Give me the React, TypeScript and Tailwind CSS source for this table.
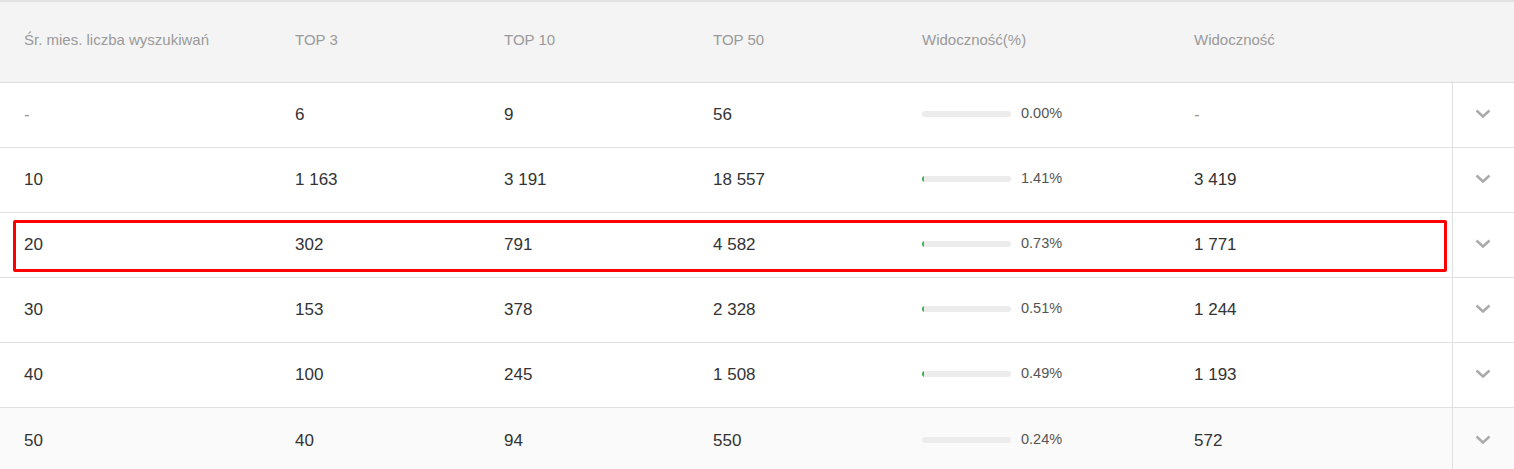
import React from "react";

const rows = [
  { a: "-", b: "6", c: "9", d: "56", p: "0.00%", g: 0, v: "-", dim: true },
  { a: "10", b: "1 163", c: "3 191", d: "18 557", p: "1.41%", g: 2, v: "3 419" },
  { a: "20", b: "302", c: "791", d: "4 582", p: "0.73%", g: 2, v: "1 771", hl: true },
  { a: "30", b: "153", c: "378", d: "2 328", p: "0.51%", g: 2, v: "1 244" },
  { a: "40", b: "100", c: "245", d: "1 508", p: "0.49%", g: 2, v: "1 193" },
  { a: "50", b: "40", c: "94", d: "550", p: "0.24%", g: 0, v: "572", last: true },
];

const cols = "grid grid-cols-[271px_209px_209px_209px_272px_282px_62px]";

function Chevron() {
  return (
    <svg width="16" height="10" viewBox="0 0 16 10" fill="none">
      <path d="M1.5 1.5 L8 7.5 L14.5 1.5" stroke="#aaaaaa" strokeWidth="2.4" />
    </svg>
  );
}

export default function App() {
  return (
    <div className="w-[1514px] h-[469px] overflow-hidden bg-white font-['Liberation_Sans',Arial,sans-serif] border-t-2 border-[#e2e2e2]">
      <div className={`${cols} h-[81px] bg-[#f4f4f4] border-b border-[#dcdcdc] text-[15px] text-[#9a9a9a] items-center`}>
        <div className="pl-6 -mt-[4px]">Śr. mies. liczba wyszukiwań</div>
        <div className="pl-6 -mt-[4px]">TOP 3</div>
        <div className="pl-6 -mt-[4px]">TOP 10</div>
        <div className="pl-6 -mt-[4px]">TOP 50</div>
        <div className="pl-6 -mt-[4px]">Widoczność(%)</div>
        <div className="pl-6 -mt-[4px]">Widoczność</div>
        <div />
      </div>
      {rows.map((r, i) => (
        <div
          key={i}
          className={`${cols} relative h-[65px] items-stretch text-[17px] text-[#333] ${r.last ? "bg-[#fafafa]" : "bg-white border-b border-[#e0e0e0]"}`}
        >
          <div className={`pl-6 flex items-center ${r.dim ? "text-[#999]" : ""}`}>{r.a}</div>
          <div className="pl-6 flex items-center">{r.b}</div>
          <div className="pl-6 flex items-center">{r.c}</div>
          <div className="pl-6 flex items-center">{r.d}</div>
          <div className="pl-6 flex items-center gap-[10px] -mt-[2px]">
            <div className="w-[89px] h-[6px] rounded-full bg-[#ececec] overflow-hidden">
              <div className="h-full bg-[#3ab54a]" style={{ width: `${r.g}px` }} />
            </div>
            <span className="text-[14.5px] text-[#555]">{r.p}</span>
          </div>
          <div className={`pl-6 flex items-center ${r.dim ? "text-[#999]" : ""}`}>{r.v}</div>
          <div className="border-l border-[#e0e0e0] flex items-center justify-center pr-[1px] -mt-[2px]">
            <Chevron />
          </div>
          {r.hl && (
            <div className="absolute left-[13px] top-[7px] w-[1434px] h-[52px] border-[3px] border-[#ff0000] rounded-[2px] pointer-events-none" />
          )}
        </div>
      ))}
    </div>
  );
}
